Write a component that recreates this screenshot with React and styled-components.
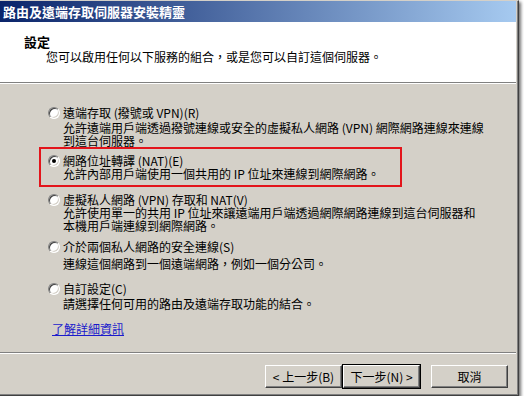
import React from "react";
import styled, { createGlobalStyle } from "styled-components";

const GlobalStyle = createGlobalStyle`
  body {
    margin: 0;
    background: #ffffff;
    font-family: "Noto Sans CJK TC", "Liberation Sans", sans-serif;
    font-size: 12px;
    color: #000;
  }
`;

const options = [
  {
    label: "遠端存取 (撥號或 VPN)(R)",
    lines: [
      "允許遠端用戶端透過撥號連線或安全的虛擬私人網路 (VPN) 網際網路連線來連線",
      "到這台伺服器。",
    ],
    mt: 0,
    gap: 2,
  },
  {
    label: "網路位址轉譯 (NAT)(E)",
    lines: ["允許內部用戶端使用一個共用的 IP 位址來連線到網際網路。"],
    checked: true,
    highlight: true,
    mt: 0,
    gap: 0,
  },
  {
    label: "虛擬私人網路 (VPN) 存取和 NAT(V)",
    lines: [
      "允許使用單一的共用 IP 位址來讓遠端用戶端透過網際網路連線到這台伺服器和",
      "本機用戶端連線到網際網路。",
    ],
    mt: 6,
    gap: 0,
  },
  {
    label: "介於兩個私人網路的安全連線(S)",
    lines: ["連線這個網路到一個遠端網路，例如一個分公司。"],
    mt: 8,
    gap: 4,
  },
  {
    label: "自訂設定(C)",
    lines: ["請選擇任何可用的路由及遠端存取功能的結合。"],
    mt: 12,
    gap: 2,
  },
];

function Option({ label, lines, checked, gap }) {
  return (
    <>
      <RadioRow>
        <Radio $checked={checked} />
        <span>{label}</span>
      </RadioRow>
      <Desc $gap={gap}>
        {lines.map((l) => (
          <div key={l}>{l}</div>
        ))}
      </Desc>
    </>
  );
}

export default function App() {
  return (
    <>
      <GlobalStyle />
      <Window>
        <TitleBar>路由及遠端存取伺服器安裝精靈</TitleBar>
        <Header>
          <HeaderTitle>設定</HeaderTitle>
          <HeaderSub>您可以啟用任何以下服務的組合，或是您可以自訂這個伺服器。</HeaderSub>
        </Header>
        <Etch />
        <Body>
          {options.map((o) =>
            o.highlight ? (
              <Highlight key={o.label}>
                <Option {...o} />
              </Highlight>
            ) : (
              <OptionBlock key={o.label} $mt={o.mt}>
                <Option {...o} />
              </OptionBlock>
            )
          )}
          <MoreLink href="#">了解詳細資訊</MoreLink>
        </Body>
        <Etch />
        <Footer>
          <ButtonGroup>
            <Button>&lt; 上一步(B)</Button>
            <Button $default>下一步(N) &gt;</Button>
          </ButtonGroup>
          <Button>取消</Button>
        </Footer>
      </Window>
    </>
  );
}

const Window = styled.div`
  width: 518px;
  height: 394px;
  display: flex;
  flex-direction: column;
  background: #d4d0c8;
  border-top: 1px solid #d4d0c8;
  border-right: 1px solid #404040;
  border-bottom: 1px solid #404040;
  box-shadow: inset -1px -1px 0 #808080, 2px 2px 3px rgba(0, 0, 0, 0.55);
`;

const TitleBar = styled.div`
  height: 21px;
  margin-right: 2px;
  padding-left: 3px;
  line-height: 21px;
  font-size: 13px;
  font-weight: bold;
  color: #ffffff;
  background: linear-gradient(to right, #0a246a, #a6caf0);
  white-space: nowrap;
`;

const Header = styled.div`
  height: 60px;
  margin-right: 2px;
  background: #ffffff;
  padding: 13px 0 0 24px;
  box-sizing: border-box;
  line-height: 13px;
`;

const HeaderTitle = styled.div`
  font-size: 13px;
  font-weight: bold;
`;

const HeaderSub = styled.div`
  margin-top: 2px;
  padding-left: 22px;
  white-space: nowrap;
`;

const Etch = styled.div`
  height: 1px;
  margin-right: 2px;
  background: #808080;
  border-bottom: 1px solid #ffffff;
`;

const Body = styled.div`
  flex: 1;
  padding-top: 22px;
  line-height: 13px;
  white-space: nowrap;
`;

const OptionBlock = styled.div`
  margin: ${(p) => p.$mt}px 0 0 48px;
`;

const Highlight = styled.div`
  width: 352px;
  margin-left: 39px;
  border: 2px solid #e3141b;
  padding: 5px 0 5px 7px;
`;

const RadioRow = styled.div`
  display: flex;
  align-items: center;
  gap: 3px;
  height: 13px;
`;

const Radio = styled.span`
  position: relative;
  width: 10px;
  height: 10px;
  border-radius: 50%;
  background: #ffffff;
  border: 1px solid;
  border-color: #808080 #ffffff #ffffff #808080;
  box-shadow: inset 1px 1px 0 #404040, inset -1px -1px 0 #d4d0c8;

  &::after {
    content: "";
    display: ${(p) => (p.$checked ? "block" : "none")};
    position: absolute;
    left: 3px;
    top: 3px;
    width: 4px;
    height: 4px;
    border-radius: 50%;
    background: #000000;
  }
`;

const Desc = styled.div`
  margin-top: ${(p) => p.$gap}px;
  padding-left: 15px;
`;

const MoreLink = styled.a`
  display: inline-block;
  margin: 12px 0 0 52px;
  color: #1a1acc;
  text-decoration: underline;
`;

const Footer = styled.div`
  display: flex;
  justify-content: flex-end;
  align-items: flex-start;
  gap: 11px;
  padding: 11px 10px 0 0;
  height: 30px;
`;

const ButtonGroup = styled.div`
  display: flex;
`;

const Button = styled.button`
  width: 77px;
  height: 23px;
  padding: 0;
  font-family: "Noto Sans CJK TC", "Liberation Sans", sans-serif;
  font-size: 12px;
  color: #000;
  background: #d4d0c8;
  border: 1px solid;
  border-color: #ffffff #404040 #404040 #ffffff;
  box-shadow: inset -1px -1px 0 #808080;
  outline: ${(p) => (p.$default ? "1px solid #000" : "none")};
  outline-offset: 0;
  margin-left: ${(p) => (p.$default ? "1px" : "0")};
`;
